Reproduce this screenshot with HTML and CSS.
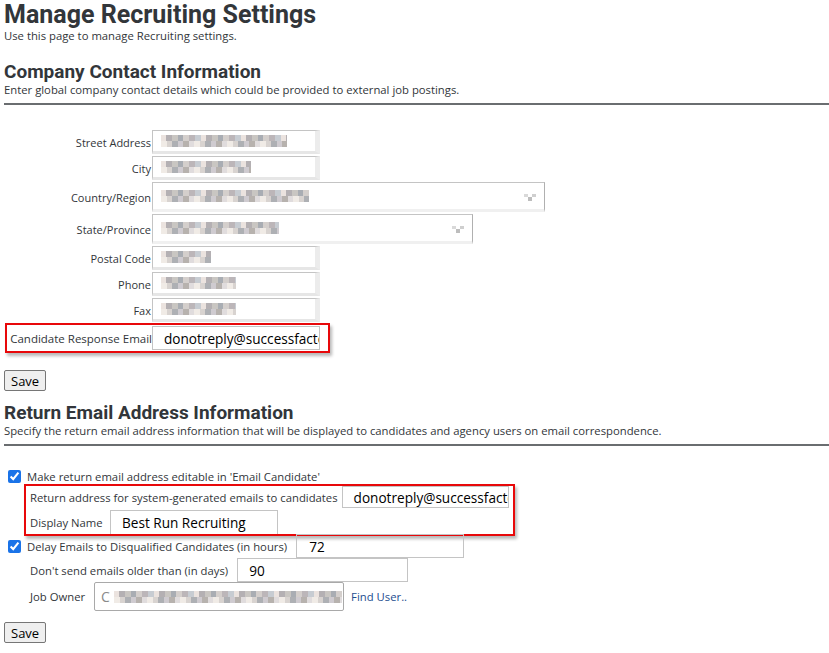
FILE: index.html
```html
<!DOCTYPE html>
<html>
<head>
<meta charset="utf-8">
<link rel="stylesheet" href="styles.css">
</head>
<body>
<h1 class="page-title">Manage Recruiting Settings</h1>
<p class="desc">Use this page to manage Recruiting settings.</p>

<section class="section sec-company">
  <h2 class="sec-title">Company Contact Information</h2>
  <p class="desc">Enter global company contact details which could be provided to external job postings.</p>
  <hr class="rule">
  <div class="contact-form">
    <div class="row r-std"><span class="lbl">Street Address</span><span class="fld w167"><span class="blur b1"></span></span></div>
    <div class="row r-std"><span class="lbl">City</span><span class="fld w167"><span class="blur b2"></span></span></div>
    <div class="row r-tall"><span class="lbl">Country/Region</span><span class="fld sel w393"><span class="blur b3"></span><svg class="arr" width="16" height="8" viewBox="0 0 16 8"><rect x="2" y="0" width="4" height="3" fill="#d9d9d9"/><rect x="10" y="0" width="4" height="3" fill="#cfcfcf"/><rect x="6" y="3" width="4" height="4" fill="#bdbdbd"/></svg></span></div>
    <div class="row r-tall"><span class="lbl">State/Province</span><span class="fld sel w321"><span class="blur b4"></span><svg class="arr" width="16" height="8" viewBox="0 0 16 8"><rect x="2" y="0" width="4" height="3" fill="#d9d9d9"/><rect x="10" y="0" width="4" height="3" fill="#cfcfcf"/><rect x="6" y="3" width="4" height="4" fill="#bdbdbd"/></svg></span></div>
    <div class="row r-std"><span class="lbl">Postal Code</span><span class="fld w167"><span class="blur b5"></span></span></div>
    <div class="row r-std"><span class="lbl">Phone</span><span class="fld w167"><span class="blur b6"></span></span></div>
    <div class="row r-std"><span class="lbl">Fax</span><span class="fld w167"><span class="blur b6"></span></span></div>
    <div class="row hl hl-email"><span class="lbl lbl-hl">Candidate Response Email</span><span class="val">donotreply@successfactors.com</span></div>
  </div>
  <button class="save">Save</button>
</section>

<section class="section sec-return">
  <h2 class="sec-title">Return Email Address Information</h2>
  <p class="desc">Specify the return email address information that will be displayed to candidates and agency users on email correspondence.</p>
  <hr class="rule">
  <div class="return-form">
    <label class="chk-row"><input type="checkbox" checked><span>Make return email address editable in 'Email Candidate'</span></label>
    <div class="hl hl-return">
      <div class="sub-row r-addr"><span class="lbl2">Return address for system-generated emails to candidates</span><span class="val w168">donotreply@successfactors.com</span></div>
      <div class="sub-row r-name"><span class="lbl2 lbl-name">Display Name</span><span class="val w167">Best Run Recruiting</span></div>
    </div>
    <label class="chk-row chk-delay"><input type="checkbox" checked><span class="lbl2">Delay Emails to Disqualified Candidates (in hours)</span><span class="val w168 num">72</span></label>
    <div class="sub-row indent"><span class="lbl2">Don't send emails older than (in days)</span><span class="val w171">90</span></div>
    <div class="sub-row indent owner"><span class="lbl2">Job Owner</span><span class="val owner-fld"><span class="oc">C</span><span class="blur b7"></span></span><a class="find" href="#">Find User..</a></div>
  </div>
  <button class="save">Save</button>
</section>
</body>
</html>
```
FILE: styles.css
```css
html, body { margin: 0; padding: 0; background: #fff; }
body {
  padding: 0 0 0 4px;
  font-family: "Open Sans", "Liberation Sans", sans-serif;
  color: #32363a;
  font-size: 11px;
}
.page-title {
  margin: 0;
  padding-top: 0;
  font-family: "Roboto", "Liberation Sans", sans-serif;
  font-weight: 700;
  font-size: 25px;
  line-height: 29px;
  color: #32363a;
}
.desc {
  margin: 0;
  font-size: 11.3px;
  line-height: 13px;
  color: #32363a;
}
.section { display: flex; flex-direction: column; align-items: flex-start; }
.sec-company { padding-top: 19px; }
.sec-return { padding-top: 11px; }
.sec-title {
  margin: 0;
  font-family: "Roboto", "Liberation Sans", sans-serif;
  font-weight: 700;
  font-size: 19px;
  line-height: 22px;
  color: #32363a;
}
.sec-title + .desc { line-height: 14px; }
.rule {
  align-self: stretch;
  margin: 6px 0 0 0;
  border: 0;
  height: 2px;
  background: #6a6d70;
}
.contact-form {
  display: flex;
  flex-direction: column;
  gap: 2px;
  margin-top: 25px;
}
.row { display: flex; align-items: center; }
.r-std { height: 24px; }
.r-tall { height: 30px; }
.lbl {
  width: 147px;
  text-align: right;
  font-size: 11px;
  color: #32363a;
  padding-right: 1px;
}
.fld {
  align-self: stretch;
  box-sizing: border-box;
  display: flex;
  align-items: center;
  border: 1px solid #c4c4c4;
  border-right: 5px solid #ececec;
  border-bottom: 3px solid #e6e6e6;
  padding-left: 8px;
  position: relative;
}
.w167 { width: 168px; }
.w393 { width: 393px; }
.w321 { width: 321px; }
.sel { border-right: 1px solid #b0b0b0; border-bottom-color: #f0f0f0; }
.arr { position: absolute; right: 6px; top: 11px; }
.blur {
  display: block;
  height: 12px;
  background:
    repeating-linear-gradient(90deg, #ebe3df 0 5px, #b4b0b3 5px 11px, #c9c6c2 11px 17px, #a9adb3 17px 22px, #d4cfcc 22px 28px, #bcb6b9 28px 34px, #c7ccd2 34px 40px) top / 100% 6px no-repeat,
    repeating-linear-gradient(90deg, #f0ebe6 0 6px, #d8d3d0 6px 11px, #aeb0b4 11px 17px, #cfcbd0 17px 22px, #b7b2ae 22px 28px, #e0dcdd 28px 33px) bottom / 100% 6px no-repeat;
}
.b1 { width: 126px; }
.b2 { width: 90px; }
.b3 { width: 148px; }
.b4 { width: 118px; }
.b5 { width: 50px; }
.b6 { width: 75px; }
.b7 { width: 228px; }
.hl {
  border: 2px solid #e8080a;
  box-shadow: 2px 3px 3px rgba(0,0,0,0.28);
}
.contact-form .hl-email {
  height: 30px;
  box-sizing: border-box;
  margin-left: 1px;
  margin-top: -1px;
  width: 325px;
  padding-left: 2px;
}
.hl-email .lbl {
  width: 143px;
  text-align: right;
  font-size: 11.5px;
  padding-right: 0;
  white-space: nowrap;
}
.val {
  box-sizing: border-box;
  display: flex;
  align-items: center;
  height: 24px;
  border: 1px solid #c4c4c4;
  padding-left: 11px;
  font-family: "Open Sans", "Liberation Sans", sans-serif;
  font-size: 13.6px;
  color: #000;
  overflow: hidden;
  white-space: nowrap;
}
.hl-email .val { width: 168px; margin-left: 0; padding-left: 11px; }
.save {
  margin-top: 17px;
  font-family: "Open Sans", "Liberation Sans", sans-serif;
  font-size: 13px;
  line-height: 16px;
  padding: 1px 6px 1px;
  background: #efefef;
  border: 1px solid #767676;
  border-radius: 2px;
  color: #000;
  height: 21px;
}
.sec-return .save { margin-top: 11px; }
.return-form {
  display: flex;
  flex-direction: column;
  margin-top: 23px;
  align-items: flex-start;
}
.chk-row { display: flex; align-items: center; font-size: 11.3px; color: #32363a; }
.chk-row input {
  margin: 0 6px 0 4px;
  width: 13px;
  height: 13px;
  accent-color: #1a73e8;
}
.hl-return {
  margin-left: 20px;
  margin-top: 0;
  width: 491px;
  box-sizing: border-box;
  padding: 0 4px;
  display: flex;
  flex-direction: column;
}
.sub-row { display: flex; align-items: center; }
.lbl2 { font-size: 11.3px; color: #32363a; margin-right: 4px; white-space: nowrap; }
.r-addr .val { height: 22px; margin-top: 0; }
.r-name { margin-top: 2px; }
.r-name .val { height: 24px; border-bottom: 0; }
.lbl-name { width: 80px; margin-right: 0; }
.w168 { width: 168px; }
.w171 { width: 171px; }
.chk-delay { margin-top: -2px; }
.chk-delay .val { height: 24px; margin-left: 5px; }
.num { padding-left: 12px; }
.indent { margin-left: 26px; }
.indent .lbl2 { margin-right: 9px; }
.indent .val { height: 24px; }
.owner .lbl2 { margin-right: 9px; }
.owner .val { height: 29px; }
.owner-fld {
  width: 250px;
  padding-left: 6px !important;
  font-size: 14px;
  color: #8a8a8a !important;
  gap: 4px;
  border-color: #a9a9a9 !important;
  border-radius: 2px;
}
.find {
  margin-left: 7px;
  font-size: 11.3px;
  color: #1d4e8f;
  text-decoration: none;
}
```
